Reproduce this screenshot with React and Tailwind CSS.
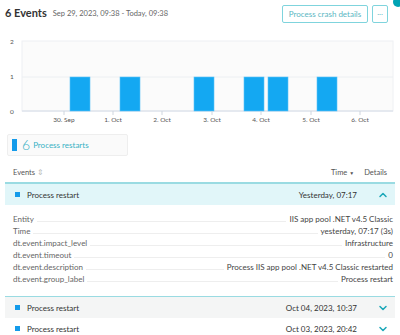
import { ChevronUp, ChevronDown } from "lucide-react";

const bars = [70, 120, 194, 244, 268, 317];
const ticks = [
  { x: 64, label: "30. Sep" },
  { x: 113, label: "1. Oct" },
  { x: 162, label: "2. Oct" },
  { x: 212, label: "3. Oct" },
  { x: 261, label: "4. Oct" },
  { x: 311, label: "5. Oct" },
  { x: 360, label: "6. Oct" },
];

const details = [
  ["Entity", "IIS app pool .NET v4.5 Classic"],
  ["Time", "yesterday, 07:17 (3s)"],
  ["dt.event.impact_level", "Infrastructure"],
  ["dt.event.timeout", "0"],
  ["dt.event.description", "Process IIS app pool .NET v4.5 Classic restarted"],
  ["dt.event.group_label", "Process restart"],
];

// chart drawn below the 24px header, so y values are page y - 24
function Chart() {
  return (
    <svg width="400" height="102" className="block">
      <rect x="22" y="17" width="371" height="70" fill="#fbfbfb" stroke="#eef0f3" />
      <line x1="22" y1="53" x2="393" y2="53" stroke="#eceff2" />
      <line x1="22" y1="87" x2="393" y2="87" stroke="#dfe5ec" strokeWidth="1.5" />
      {bars.map((x) => (
        <rect key={x} x={x} y="53" width="20" height="34" fill="#14a8f2" stroke="#5cc4f7" strokeWidth="0.6" />
      ))}
      {ticks.map((t) => (
        <g key={t.label}>
          <line x1={t.x} y1="87" x2={t.x} y2="91" stroke="#cfd6df" />
          <text x={t.x} y="98" textAnchor="middle" fontSize="6.5" fill="#555" fontFamily="Lato, sans-serif">
            {t.label}
          </text>
        </g>
      ))}
      <text x="10" y="20" fontSize="6.5" fill="#555" fontFamily="Lato, sans-serif">2</text>
      <text x="10" y="55" fontSize="6.5" fill="#555" fontFamily="Lato, sans-serif">1</text>
      <text x="10" y="90" fontSize="6.5" fill="#555" fontFamily="Lato, sans-serif">0</text>
    </svg>
  );
}

function RowHead({ time, open, className }) {
  return (
    <div className={`flex items-center h-[21px] pl-[10px] pr-[6px] text-[8px] text-[#333] ${className}`}>
      <span className="w-[5px] h-[5px] bg-[#149bea] mr-[7px]" />
      <span className="flex-1">Process restart</span>
      <span className="mr-[20px]">{time}</span>
      {open ? (
        <ChevronUp size={12} strokeWidth={3} className="text-[#1aa7b8]" />
      ) : (
        <ChevronDown size={12} strokeWidth={3} className="text-[#1aa7b8]" />
      )}
    </div>
  );
}

export default function App() {
  return (
    <div className="w-[400px] h-[335px] overflow-hidden bg-white font-['Lato',sans-serif] relative">
      <div className="flex items-center pl-[5px] pr-[12px] pt-[3px] h-[24px]">
        <span className="text-[11px] font-bold text-[#333] mr-[6px]">6 Events</span>
        <span className="text-[7.5px] text-[#666] flex-1">Sep 29, 2023, 09:38 - Today, 09:38</span>
        <button className="h-[18px] w-[86px] border border-[#7fd4dd] rounded-[2px] text-[8px] text-[#5ab6c2] mr-[4px]">
          Process crash details
        </button>
        <button className="h-[18px] w-[16px] border border-[#7fd4dd] rounded-[2px] text-[8px] text-[#5ab6c2] leading-none pb-[3px]">
          ...
        </button>
      </div>
      <span className="absolute top-[-3px] right-[-3px] w-[10px] h-[10px] rounded-full bg-[#00a3b4]" />

      <Chart />

      <div className="ml-[7px] mt-[8px] w-[121px] h-[22px] bg-[#fafafa] border border-[#eeeeee] rounded-[2px] flex items-center pl-[4px]">
        <span className="w-[5px] h-[12px] bg-[#149bea] mr-[5px]" />
        <span className="text-[14px] font-light text-[#37b1c4] leading-none mr-[3px]">6</span>
        <span className="text-[8px] text-[#37b1c4]">Process restarts</span>
      </div>

      <div className="flex items-center pl-[13px] pr-[13px] mt-[10px] h-[14px] text-[7.5px] text-[#555]">
        <span className="flex-1">
          Events <span className="text-[#bbb]">⇕</span>
        </span>
        <span className="mr-[10px]">
          Time <span className="text-[5px]">▼</span>
        </span>
        <span>Details</span>
      </div>

      <div className="mx-[5px] mt-[2px] border-t-2 border-[#9adbe2]">
        <RowHead time="Yesterday, 07:17" open className="bg-[#e1f6f9]" />
        <div className="pt-[8px] pb-[11px] pl-[8px] pr-[2px]">
          {details.map(([k, v]) => (
            <div key={k} className="flex items-center h-[12px] text-[8px] text-[#555]">
              <span className="text-[#666]">{k}</span>
              <span className="flex-1 self-end border-b border-[#eeeeee] mx-[3px] mb-[3px]" />
              <span className="text-[#444]">{v}</span>
            </div>
          ))}
        </div>
        <div className="border-t border-[#9adbe2]">
          <RowHead time="Oct 04, 2023, 10:37" className="bg-[#f4f5f5]" />
        </div>
        <RowHead time="Oct 03, 2023, 20:42" />
      </div>
    </div>
  );
}
